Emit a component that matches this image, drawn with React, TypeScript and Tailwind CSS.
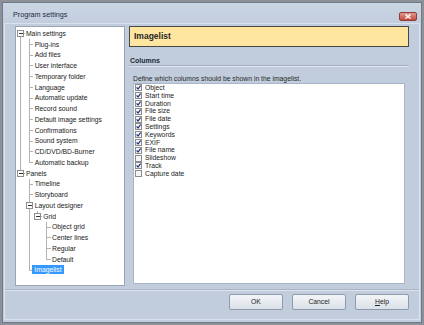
import React from "react";

type TreeNode = { label: string; children?: TreeNode[]; selected?: boolean };

const TREE: TreeNode[] = [
  {
    label: "Main settings",
    children: [
      "Plug-ins",
      "Add files",
      "User interface",
      "Temporary folder",
      "Language",
      "Automatic update",
      "Record sound",
      "Default image settings",
      "Confirmations",
      "Sound system",
      "CD/DVD/BD-Burner",
      "Automatic backup",
    ].map((label) => ({ label })),
  },
  {
    label: "Panels",
    children: [
      { label: "Timeline" },
      { label: "Storyboard" },
      {
        label: "Layout designer",
        children: [
          {
            label: "Grid",
            children: [
              { label: "Object grid" },
              { label: "Center lines" },
              { label: "Regular" },
              { label: "Default" },
            ],
          },
        ],
      },
      { label: "Imagelist", selected: true },
    ],
  },
];

const COLUMNS: { label: string; checked: boolean }[] = [
  { label: "Object", checked: true },
  { label: "Start time", checked: true },
  { label: "Duration", checked: true },
  { label: "File size", checked: true },
  { label: "File date", checked: true },
  { label: "Settings", checked: true },
  { label: "Keywords", checked: true },
  { label: "EXIF", checked: true },
  { label: "File name", checked: true },
  { label: "Slideshow", checked: false },
  { label: "Track", checked: true },
  { label: "Capture date", checked: false },
];

type FlatRow = {
  label: string;
  level: number;
  guides: boolean[]; // ancestor has next sibling
  hasNext: boolean;
  isFirstRoot: boolean;
  expandable: boolean;
  selected?: boolean;
};

const flatten = (nodes: TreeNode[], level = 0, guides: boolean[] = []): FlatRow[] =>
  nodes.flatMap((node, i) => {
    const hasNext = i < nodes.length - 1;
    const row: FlatRow = {
      label: node.label,
      level,
      guides,
      hasNext,
      isFirstRoot: level === 0 && i === 0,
      expandable: !!node.children,
      selected: node.selected,
    };
    return [row, ...(node.children ? flatten(node.children, level + 1, [...guides, hasNext]) : [])];
  });

const INDENT = 8.67;
const ROW_H = 10.75;
const LINE = "#b3b3b3";

const TreeLines = ({ row }: { row: FlatRow }) => {
  const w = (row.level + 1) * INDENT;
  const cx = (k: number) => Math.floor(k * INDENT + INDENT / 2) + 0.5;
  const mid = Math.floor(ROW_H / 2) + 0.5;
  const own = cx(row.level);
  return (
    <svg width={w} height={ROW_H} className="shrink-0" shapeRendering="crispEdges">
      {row.guides.map((g, k) =>
        g ? <line key={k} x1={cx(k)} y1={0} x2={cx(k)} y2={ROW_H} stroke={LINE} /> : null
      )}
      {!row.isFirstRoot && <line x1={own} y1={0} x2={own} y2={mid} stroke={LINE} />}
      {row.hasNext && <line x1={own} y1={mid} x2={own} y2={ROW_H} stroke={LINE} />}
      <line x1={own} y1={mid} x2={w} y2={mid} stroke={LINE} />
      {row.expandable && (
        <>
          <rect x={own - 3} y={mid - 3} width={6} height={6} fill="#fff" stroke="#8e8e8e" />
          <line x1={own - 1.5} y1={mid} x2={own + 2} y2={mid} stroke="#333" />
        </>
      )}
    </svg>
  );
};

const Check = ({ checked }: { checked: boolean }) => (
  <svg width="7" height="7" className="shrink-0" shapeRendering="crispEdges">
    <rect x="0.5" y="0.5" width="6" height="6" fill="#f4f4f4" stroke="#8c8c8c" />
    {checked && (
      <polyline
        points="1.6,3.4 3,5 5.6,1.6"
        fill="none"
        stroke="#21347a"
        strokeWidth="1.2"
        shapeRendering="auto"
      />
    )}
  </svg>
);

const DialogButton = ({ children }: { children: React.ReactNode }) => (
  <button className="flex h-[16px] w-[54px] items-center justify-center rounded-[2px] border border-[#8f9bad] bg-gradient-to-b from-[#f3f5f8] to-[#dbe1e9] text-[6.8px] text-[#1e1e1e]">
    {children}
  </button>
);

export default function App() {
  const rows = flatten(TREE);
  return (
    <div className="h-[325px] w-[424px] bg-[#8d9096] p-[2px] font-['Liberation_Sans',Arial,sans-serif]">
      <div className="flex h-full w-full flex-col border border-[#6e7a8c] bg-[#c1cddd]">
        {/* title bar */}
        <div className="flex h-[20px] shrink-0 items-center justify-between bg-gradient-to-b from-[#cbd6e5] to-[#c1cddd] pl-[10px] pr-[4px] pt-[4px]">
          <span className="text-[7.2px] text-[#1c2a3c]">Program settings</span>
          <div className="mt-[3px] flex h-[9px] w-[18px] items-center justify-center rounded-[2px] border border-[#8a3b3b] bg-gradient-to-b from-[#e39a8f] to-[#c24a3e]">
            <svg width="6" height="5" viewBox="0 0 6 5">
              <path d="M0.5 0.5 L5.5 4.5 M5.5 0.5 L0.5 4.5" stroke="#fff" strokeWidth="1.4" />
            </svg>
          </div>
        </div>

        {/* client area */}
        <div className="mx-[1px] mb-[2px] flex flex-1 flex-col border border-[#d9e1ec] bg-[#c1cddd]">
          <div className="flex gap-[4px] pl-[10px] pr-[8px] pt-[2px]">
            {/* tree */}
            <div className="h-[260px] w-[110px] shrink-0 border border-[#9aa6b7] bg-white pt-[1px]">
              {rows.map((row, i) => (
                <div key={i} className="flex h-[10.75px] items-center">
                  <TreeLines row={row} />
                  <span
                    className={
                      row.selected
                        ? "ml-[-1px] whitespace-nowrap bg-[#3399ff] px-[2px] text-[6.8px] leading-[9px] text-white"
                        : "ml-[1.3px] whitespace-nowrap text-[6.8px] leading-[9px] text-[#1b1b1b]"
                    }
                  >
                    {row.label}
                  </span>
                </div>
              ))}
            </div>

            {/* page */}
            <div className="flex w-[280px] flex-col">
              <div className="flex h-[21px] items-center border border-[#474747] bg-[#ffe6a0] pl-[4px]">
                <span className="text-[8.5px] font-bold text-[#262626]">Imagelist</span>
              </div>
              <div className="mt-[9px] pl-[1px] text-[7px] font-bold leading-[9px] text-[#1b2838]">
                Columns
              </div>
              <div className="mt-[0px] border-t border-[#a4b0c1] border-b-[#dfe6ef] border-b" />
              <div className="mt-[8px] pl-[4px] text-[6.8px] leading-[8px] text-[#2a2a2a]">
                Define which columns should be shown in the imagelist.
              </div>
              <div className="ml-[4px] mr-[4px] h-[201px] border border-[#a9b6c7] bg-white">
                {COLUMNS.map((c) => (
                  <div key={c.label} className="flex h-[7.8px] items-center gap-[3px] pl-[1px]">
                    <Check checked={c.checked} />
                    <span className="text-[6.8px] leading-[7.8px] text-[#1b1b1b]">{c.label}</span>
                  </div>
                ))}
              </div>
            </div>
          </div>

          {/* separator */}
          <div className="mt-[3px] border-t border-[#a9b5c6] border-b border-b-[#dbe3ee]" />

          {/* buttons */}
          <div className="flex justify-end gap-[9px] pr-[10px] pt-[3px]">
            <DialogButton>OK</DialogButton>
            <DialogButton>Cancel</DialogButton>
            <DialogButton>
              <span>
                <span className="underline">H</span>elp
              </span>
            </DialogButton>
          </div>
        </div>
      </div>
    </div>
  );
}
